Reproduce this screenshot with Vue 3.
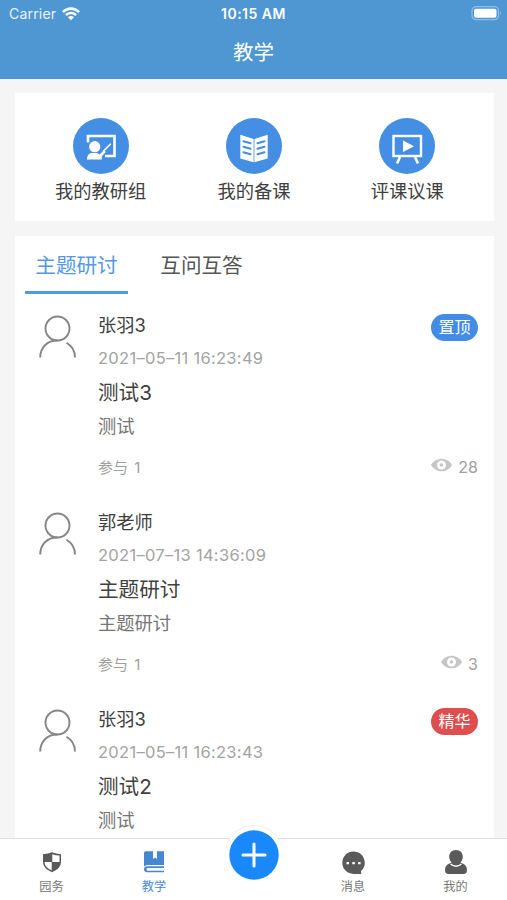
<template>
  <div class="page">
    <header class="header">
      <div class="status-bar">
        <div class="carrier">
          <span>Carrier</span>
          <svg class="wifi" viewBox="0 0 20 15">
            <path d="M1 5.2C6-.2 14-.2 19 5.2L17.2 7C13.2 2.9 6.800 2.900 2.800 7Z" />
            <path d="M4 8.300C7.400 4.900 12.600 4.900 16 8.300L14.200 10.100C11.800 7.700 8.200 7.700 5.800 10.100Z" />
            <path d="M7 11.300C8.700 9.700 11.300 9.700 13 11.300L10 14.300Z" />
          </svg>
        </div>
        <span class="time">10:15 AM</span>
        <svg class="battery" viewBox="0 0 31 15">
          <rect x="1" y=".7" width="26.500" height="13" rx="4" fill="none" stroke="#8fbfe6" stroke-width="1.200" />
          <rect x="3" y="2.700" width="22.500" height="9" rx="2" fill="#fff" />
          <path d="M29 5v4.500q1.700-2.200 0-4.500" fill="#a9cdec" />
        </svg>
      </div>
      <h1 class="title">教学</h1>
    </header>

    <section class="card entries">
      <div v-for="entry in entries" :key="entry.label" class="entry">
        <svg class="entry-icon" viewBox="0 0 56 56">
          <circle cx="28" cy="28" r="28" fill="#448ee3" />
          <!-- 讲台与教师 -->
          <g v-if="entry.icon === 'group'">
            <path d="M15 24.500V18H41.500V38H32" fill="none" stroke="#fff" stroke-width="2.600" />
            <circle cx="21.700" cy="28.700" r="5.600" fill="#fff" />
            <path d="M14 41.500c0-4 2-6.600 5-6.600h5.200l2.400 1.600 4.500-4.300 1.700 1.700-4 4.400v3.200Z" fill="#fff" />
            <path d="M30 33.500L37.800 25.800" stroke="#fff" stroke-width="1.600" />
          </g>
          <!-- 打开的书 -->
          <g v-else-if="entry.icon === 'book'">
            <path d="M14.300 16.800L27.600 21V44.300L14.300 40.500ZM41.700 16.800L28.400 21V44.300L41.700 40.500Z" fill="#fff" />
            <path
              d="M17.500 23.200l7 2.100M17.500 28.700l7 2.100M17.500 34.200l7 2.100M38.500 23.200l-7 2.100M38.500 28.700l-7 2.100M38.500 34.200l-7 2.100"
              stroke="#448ee3"
              stroke-width="2"
              stroke-linecap="round"
            />
          </g>
          <!-- 播放画板 -->
          <g v-else>
            <rect x="14.500" y="18" width="27.500" height="20" fill="none" stroke="#fff" stroke-width="2.400" />
            <path d="M24 22.500L35 28.200L24 34Z" fill="#fff" />
            <path d="M21 39l-3 6.500M36 39l3 6.500" stroke="#fff" stroke-width="2.600" />
          </g>
        </svg>
        <span class="entry-label">{{ entry.label }}</span>
      </div>
    </section>

    <section class="card topics">
      <nav class="tabs">
        <div
          v-for="(tab, index) in tabs"
          :key="tab"
          class="tab"
          :class="{ active: index === activeTab }"
          @click="activeTab = index"
        >
          {{ tab }}
        </div>
      </nav>

      <article v-for="topic in topics" :key="topic.time" class="topic">
        <svg class="avatar" viewBox="0 0 40 44">
          <g fill="none" stroke="#858585" stroke-width="1.900">
            <circle cx="19.500" cy="13.500" r="12" />
            <path d="M2.200 42.500C2.300 32.500 9 25.500 19.500 25.500M28.500 27.800C34 31 37 36 37 42.500" />
          </g>
        </svg>
        <div class="topic-body">
          <div class="topic-head">
            <span class="name">{{ topic.name }}</span>
            <span v-if="topic.badge" class="badge" :class="topic.badgeType">{{ topic.badge }}</span>
          </div>
          <div class="date">{{ topic.time }}</div>
          <div class="topic-title">{{ topic.title }}</div>
          <div class="topic-text">{{ topic.text }}</div>
          <div class="meta">
            <span class="joined">参与 {{ topic.joined }}</span>
            <span class="views">
              <svg class="eye" viewBox="0 0 22 14">
                <path d="M0 7C5-1.800 17-1.800 22 7C17 15.800 5 15.800 0 7Z" fill="#c6c6c6" />
                <circle cx="11" cy="7" r="4.700" fill="#fff" />
                <circle cx="11" cy="7" r="1.900" fill="#c6c6c6" />
              </svg>
              <span class="count">{{ topic.views }}</span>
            </span>
          </div>
        </div>
      </article>
    </section>

    <footer class="tabbar">
      <div class="tabbar-item">
        <svg class="tabbar-icon" viewBox="0 0 24 24">
          <path d="M12 2.300Q16 4 21 4.300V12Q21 18.500 12 22.200Q3 18.500 3 12V4.300Q8 4 12 2.300Z" fill="#5a5a5a" />
          <path d="M12.300 4.200V12H19.500V5.600Q15.500 5.300 12.300 4.200ZM11.700 12H4.500Q4.700 17.300 11.700 20.400Z" fill="#fff" />
        </svg>
        <span>园务</span>
      </div>
      <div class="tabbar-item current">
        <svg class="tabbar-icon" viewBox="0 0 24 24">
          <path d="M3.500 1.200H11V9l2-1.600L15 9V1.200h7V15H5.500q-1.800 0-3.500 1.500V3q0-1.800 1.500-1.800Z" fill="#4787d2" />
          <path d="M22 16.300H5q-3 .3-3 3t3 3H22V20.700H5.800q-1.300-.2-1.300-1.400t1.300-1.300H22Z" fill="#4787d2" />
        </svg>
        <span>教学</span>
      </div>
      <div class="add">
        <svg class="add-button" viewBox="0 0 50 50">
          <circle cx="25" cy="25" r="24.700" fill="#1989fa" />
          <path d="M14 25H36M25 14V36" stroke="#fff" stroke-width="3" stroke-linecap="round" />
        </svg>
      </div>
      <div class="tabbar-item">
        <svg class="tabbar-icon" viewBox="0 0 24 24">
          <path d="M12.500 1.500A11.200 11.200 0 1 0 12.500 23.900H20.300L20 21A11.200 11.200 0 0 0 12.500 1.500Z" fill="#5a5a5a" />
          <path d="M5.500 12H8v2.300H5.500ZM11.300 12h2.500v2.300h-2.500ZM17.100 12h2.500v2.300h-2.500Z" fill="#fff" />
        </svg>
        <span>消息</span>
      </div>
      <div class="tabbar-item">
        <svg class="tabbar-icon" viewBox="0 0 24 24">
          <path d="M12 0C7.500 0 5.200 3 5.200 6.800Q5.200 10.300 7.500 12.700C3.500 13.700 1 16 1 20Q1 24 4.500 24H19.500Q23 24 23 20C23 16 20.500 13.700 16.500 12.700Q18.800 10.300 18.800 6.800C18.800 3 16.500 0 12 0Z" fill="#5a5a5a" />
          <path d="M6.500 14Q12 18.500 17.500 14" fill="none" stroke="#fff" stroke-width="1.300" />
        </svg>
        <span>我的</span>
      </div>
    </footer>
  </div>
</template>

<script setup>
import { ref } from 'vue'

const activeTab = ref(0)
const tabs = ['主题研讨', '互问互答']

const entries = [
  { label: '我的教研组', icon: 'group' },
  { label: '我的备课', icon: 'book' },
  { label: '评课议课', icon: 'video' },
]

const topics = [
  {
    name: '张羽3',
    time: '2021–05–11 16:23:49',
    title: '测试3',
    text: '测试',
    joined: 1,
    views: 28,
    badge: '置顶',
    badgeType: 'top',
  },
  {
    name: '郭老师',
    time: '2021–07–13 14:36:09',
    title: '主题研讨',
    text: '主题研讨',
    joined: 1,
    views: 3,
  },
  {
    name: '张羽3',
    time: '2021–05–11 16:23:43',
    title: '测试2',
    text: '测试',
    joined: 1,
    views: 12,
    badge: '精华',
    badgeType: 'essence',
  },
]
</script>

<style>
body {
  margin: 0;
  overflow: hidden;
}
</style>

<style scoped>
.page {
  position: relative;
  height: 100vh;
  overflow: hidden;
  background: #f5f5f5;
  color: #404040;
  font-family: Inter, "Noto Sans CJK SC", sans-serif;
}

.header {
  height: 79px;
  background: #4f97d3;
  color: #fff;
}

.status-bar {
  display: grid;
  grid-template-columns: 1fr auto 1fr;
  align-items: center;
  height: 27px;
  padding: 0 5px 0 9px;
  font-size: 14px;
}

.carrier {
  display: flex;
  align-items: center;
  gap: 5px;
  color: #e9f3fb;
  letter-spacing: 0.2px;
}

.wifi {
  width: 20px;
  height: 15px;
  margin-bottom: 1px;
  fill: #fff;
}

.time {
  margin-right: 4px;
  font-size: 14px;
  font-weight: 600;
  letter-spacing: 0.5px;
}

.battery {
  justify-self: end;
  width: 31px;
  height: 15px;
}

.title {
  margin: 0;
  font-size: 20.5px;
  font-weight: 400;
  line-height: 52px;
  text-align: center;
}

.card {
  margin: 14px 13px 0 15px;
  background: #fff;
}

.entries {
  display: flex;
  box-sizing: border-box;
  height: 128px;
  padding: 25px 10px 0 9px;
}

.entry {
  display: flex;
  flex: 1;
  flex-direction: column;
  align-items: center;
}

.entry-icon {
  width: 56px;
  height: 56px;
}

.entry-label {
  font-size: 18.3px;
  line-height: 34px;
}

.topics {
  margin-top: 15px;
}

.tabs {
  display: flex;
  gap: 22px;
  padding-left: 10px;
}

.tab {
  box-sizing: border-box;
  width: 103px;
  height: 58px;
  border-bottom: 3px solid transparent;
  color: #555;
  font-size: 20.6px;
  line-height: 60px;
  text-align: center;
}

.tab.active {
  border-color: #5298e6;
  color: #5298e6;
}

.topic {
  display: flex;
  box-sizing: border-box;
  height: 197px;
  padding: 0 16px 0 23px;
}

.tabs + .topic {
  margin-top: 16px;
}

.avatar {
  flex: none;
  width: 40px;
  height: 44px;
  margin: 5px 20px 0 0;
}

.topic-body {
  flex: 1;
}

.topic-head {
  display: flex;
  align-items: flex-start;
  justify-content: space-between;
  height: 33px;
}

.name {
  font-size: 18.3px;
  line-height: 31px;
}

.badge {
  width: 47px;
  height: 27px;
  margin-top: 4px;
  border-radius: 14px;
  color: #fff;
  font-size: 16px;
  line-height: 27px;
  text-align: center;
}

.badge.top {
  background: #428ce6;
}

.badge.essence {
  background: #de4e4e;
}

.date {
  color: #a3a3a3;
  font-size: 16.5px;
  letter-spacing: 0.29px;
  line-height: 31px;
}

.topic-title {
  font-size: 20.6px;
  line-height: 38px;
}

.topic-text {
  color: #757575;
  font-size: 18.3px;
  line-height: 29px;
}

.meta {
  display: flex;
  align-items: center;
  justify-content: space-between;
  height: 32px;
  margin-top: 9px;
  color: #9f9f9f;
}

.joined {
  font-size: 15px;
  word-spacing: 2px;
}

.views {
  display: flex;
  align-items: center;
  gap: 6px;
}

.eye {
  width: 21px;
  height: 14px;
  margin-bottom: 3px;
}

.count {
  padding-top: 2px;
  font-size: 16px;
}

/* 底部导航覆盖在列表之上 */
.tabbar {
  position: absolute;
  right: 0;
  bottom: 0;
  left: 0;
  display: grid;
  grid-template-columns: 103px 102px 97px 102px 103px;
  box-sizing: border-box;
  height: 62px;
  border-top: 1px solid #dcdcdc;
  background: #fff;
}

.tabbar-item {
  display: flex;
  flex-direction: column;
  align-items: center;
  padding-top: 11px;
  color: #777;
  font-size: 12.2px;
  line-height: 25px;
}

.tabbar-item.current {
  color: #4a8bd6;
}

.tabbar-icon {
  flex: none;
  width: 24px;
  height: 24px;
}

.add {
  box-sizing: border-box;
  width: 58px;
  height: 58px;
  margin: -13px auto 0;
  padding: 4px;
  border-radius: 50%;
  background: #fff;
  box-shadow: 0 -1px 1px #ececec;
}

.add-button {
  display: block;
  width: 50px;
  height: 50px;
}
</style>
